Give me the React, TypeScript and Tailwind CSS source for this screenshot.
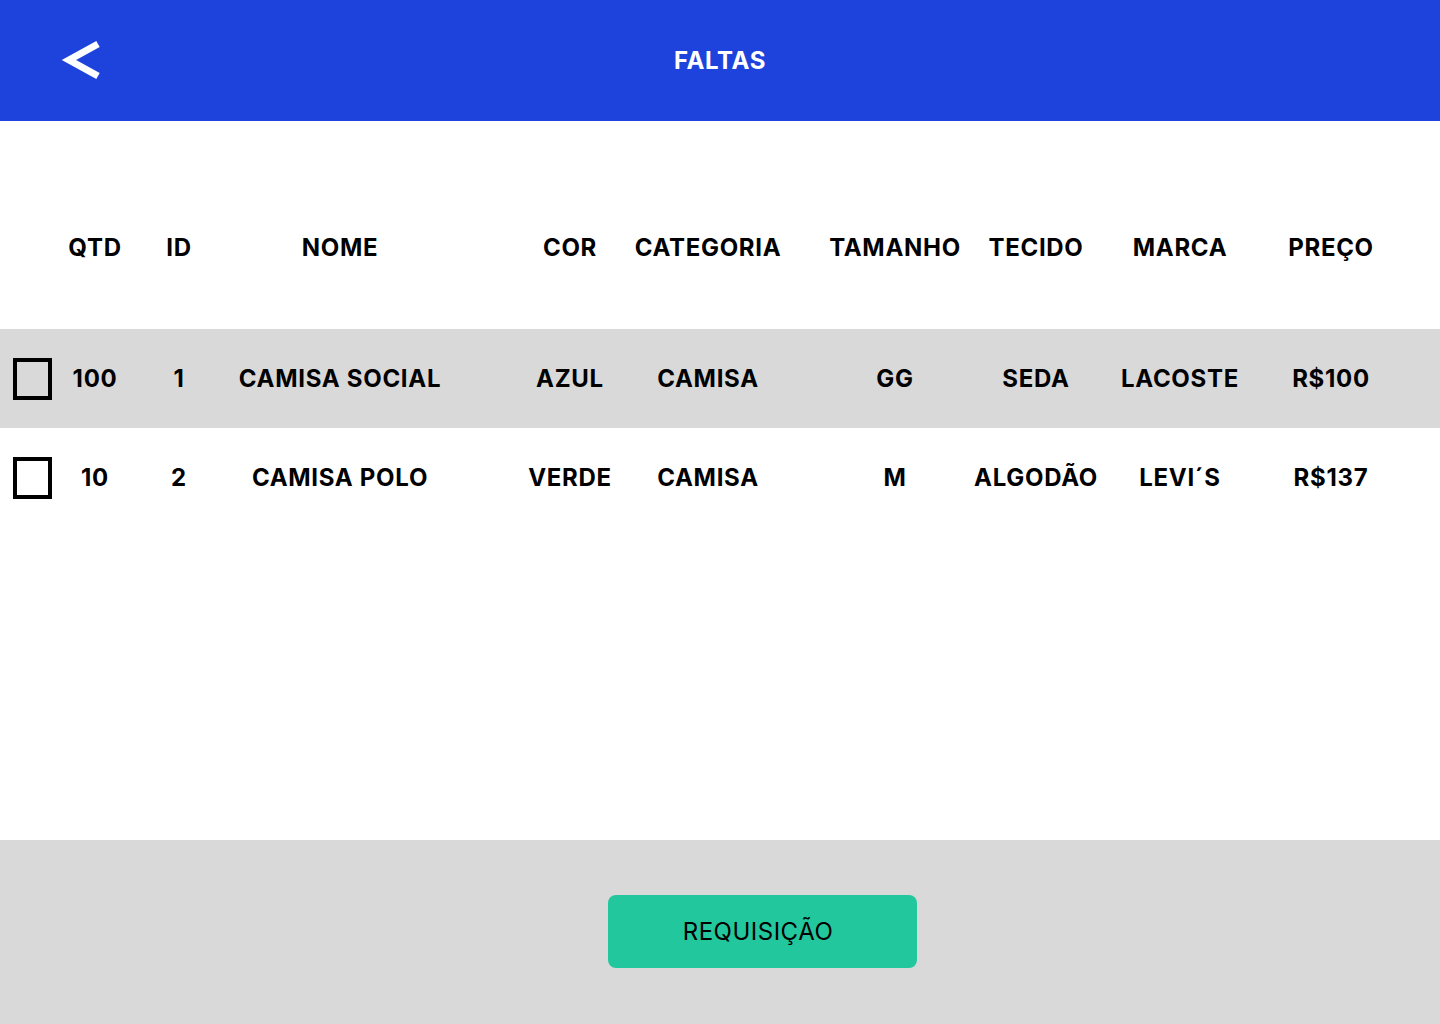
import React from "react";

type Item = {
  qtd: string;
  id: string;
  nome: string;
  cor: string;
  categoria: string;
  tamanho: string;
  tecido: string;
  marca: string;
  preco: string;
};

const items: Item[] = [
  {
    qtd: "100",
    id: "1",
    nome: "CAMISA SOCIAL",
    cor: "AZUL",
    categoria: "CAMISA",
    tamanho: "GG",
    tecido: "SEDA",
    marca: "LACOSTE",
    preco: "R$100",
  },
  {
    qtd: "10",
    id: "2",
    nome: "CAMISA POLO",
    cor: "VERDE",
    categoria: "CAMISA",
    tamanho: "M",
    tecido: "ALGODÃO",
    marca: "LEVI´S",
    preco: "R$137",
  },
];

// column widths + spacing so text centres line up with the design
const cols = [
  "w-[70px]",
  "w-[98px]",
  "w-[224px]",
  "ml-[68px] w-[100px]",
  "ml-[10px] w-[156px]",
  "ml-[44px] w-[130px]",
  "ml-[20px] w-[112px]",
  "ml-[28px] w-[120px]",
  "ml-[40px] w-[102px]",
];

const headers = ["QTD", "ID", "NOME", "COR", "CATEGORIA", "TAMANHO", "TECIDO", "MARCA", "PREÇO"];

function Cells({ values }: { values: string[] }) {
  return (
    <>
      {values.map((v, i) => (
        <div key={i} className={`${cols[i]} flex shrink-0 justify-center whitespace-nowrap`}>
          {v}
        </div>
      ))}
    </>
  );
}

export default function App() {
  return (
    <main
      className="flex h-screen w-full flex-col bg-white text-black"
      style={{ fontFamily: "Inter, 'Liberation Sans', sans-serif" }}
    >
      {/* Header */}
      <header className="relative flex h-[121px] shrink-0 items-center justify-center bg-[#1e43dc]">
        <button className="absolute left-[60px] top-[38px]">
          <svg width="44" height="44" viewBox="0 0 44 44">
            <polyline
              points="38,6 9,22 38,38"
              fill="none"
              stroke="white"
              strokeWidth="7"
              strokeLinejoin="miter"
            />
          </svg>
        </button>
        <h1 className="text-2xl font-bold tracking-[0.6px] text-white">FALTAS</h1>
      </header>

      {/* Table */}
      <section className="flex flex-1 flex-col text-2xl font-bold tracking-[0.7px]">
        <div className="flex h-[208px] items-start pt-[111px] leading-8">
          <div className="w-[60px] shrink-0" />
          <Cells values={headers} />
        </div>

        {items.map((item, idx) => (
          <div
            key={item.id}
            className={`flex h-[99px] items-center leading-8 ${idx === 0 ? "bg-[#d9d9d9]" : "bg-white"}`}
          >
            <div className="flex w-[60px] shrink-0 pl-[13px]">
              <div className="h-[42px] w-[39px] border-4 border-black" />
            </div>
            <Cells
              values={[
                item.qtd,
                item.id,
                item.nome,
                item.cor,
                item.categoria,
                item.tamanho,
                item.tecido,
                item.marca,
                item.preco,
              ]}
            />
          </div>
        ))}
      </section>

      {/* Footer */}
      <footer className="flex h-[184px] shrink-0 items-start bg-[#d9d9d9] pl-[608px] pt-[55px]">
        <button className="flex h-[73px] w-[309px] items-center justify-center rounded-lg bg-[#23c79e] pr-[9px] text-2xl font-normal tracking-[0.5px] text-black">
          REQUISIÇÃO
        </button>
      </footer>
    </main>
  );
}
